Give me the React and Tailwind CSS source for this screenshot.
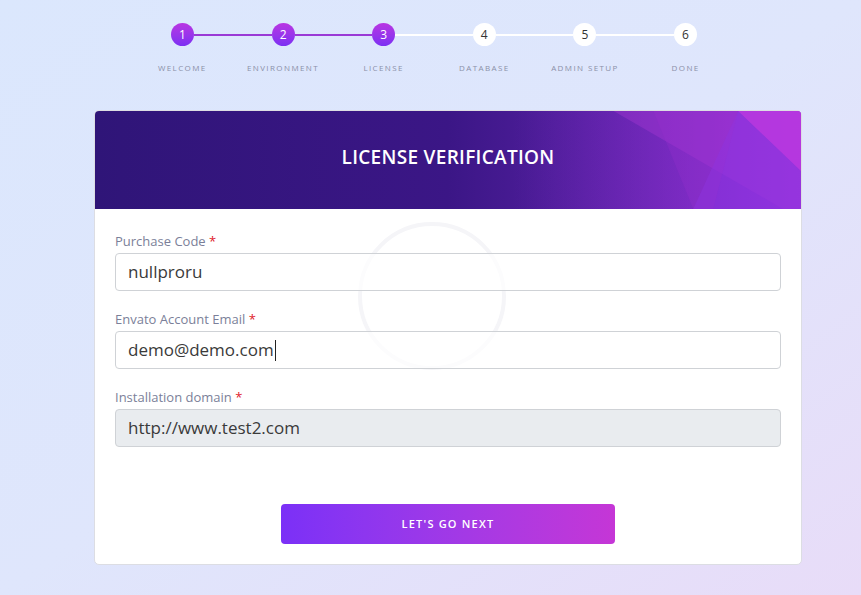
import React from 'react';

const steps = ['Welcome', 'Environment', 'License', 'Database', 'Admin Setup', 'Done'];
const current = 3;

// Stepper row: circles joined by lines, labels underneath
const Stepper = () => (
    <div className="ml-[132px] w-[604px] pt-[23px]">
        <div className="flex items-center px-[39px]">
            {steps.map((s, i) => {
                const n = i + 1;
                const done = n <= current;
                return (
                    <React.Fragment key={s}>
                        {i > 0 && (
                            <div className={n <= current ? 'flex-1 h-[2px] bg-[#9a3ad6]' : 'flex-1 h-[2px] bg-white'} />
                        )}
                        <div
                            className={
                                done
                                    ? 'w-[23px] h-[23px] rounded-full bg-gradient-to-b from-[#b934e2] to-[#7c2ff3] text-white flex items-center justify-center text-[12px]'
                                    : 'w-[23px] h-[23px] rounded-full bg-white text-[#333] flex items-center justify-center text-[12px]'
                            }
                        >
                            {n}
                        </div>
                    </React.Fragment>
                );
            })}
        </div>
        <div className="grid grid-cols-6 mt-[17px]">
            {steps.map(s => (
                <div key={s} className="text-center text-[8px] tracking-[1.4px] uppercase text-[#8b90a8] leading-[10px]">
                    {s}
                </div>
            ))}
        </div>
    </div>
);

const Field = ({ label, value, disabled, caret }) => (
    <div className="mb-[19px]">
        <div className="text-[13px] leading-[18px] text-[#7b7f99] mb-[3px]">
            {label} <span className="text-[#e0202a]">*</span>
        </div>
        <div
            className={
                (disabled ? 'bg-[#e9ecef] ' : 'bg-white/70 ') +
                'h-[38px] border border-[#cfd2d6] rounded-[4px] flex items-center px-[12px] text-[17px] text-[#3a3a3a]'
            }
        >
            {value}
            {caret && <span className="inline-block w-px h-[21px] bg-[#222] ml-px" />}
        </div>
    </div>
);

export default function App() {
    return (
        <div
            className="w-[861px] h-[595px] overflow-hidden bg-gradient-to-br from-[#dbe7fd] via-[#dfe6fc] to-[#e8dcf8] text-[#333]"
            style={{ fontFamily: '"Open Sans", "Liberation Sans", sans-serif' }}
        >
            <Stepper />

            <div className="ml-[94px] mt-[37px] w-[708px] bg-white border border-[#dcdde3] rounded-[5px] overflow-hidden">
                {/* Header */}
                <div className="relative h-[98px] pb-[6px] bg-gradient-to-r from-[#2f1578] via-[#3b1686] to-[#7b2cc8] flex items-center justify-center">
                    <svg className="absolute inset-0 w-full h-full" viewBox="0 0 708 98" preserveAspectRatio="none">
                        <defs>
                            <linearGradient id="glow" x1="0" y1="0" x2="1" y2="0">
                                <stop offset="0" stopColor="#8a2fd0" stopOpacity="0" />
                                <stop offset="1" stopColor="#a435e0" stopOpacity="0.7" />
                            </linearGradient>
                        </defs>
                        <rect x="420" y="0" width="288" height="98" fill="url(#glow)" />
                        <polygon points="520,0 708,0 708,98 690,98" fill="#b03ad8" opacity="0.35" />
                        <polygon points="645,0 708,0 708,98 600,98" fill="#8a35e6" opacity="0.45" />
                        <polygon points="645,0 708,0 708,60" fill="#d03be0" opacity="0.55" />
                        <polygon points="560,0 645,0 620,98 600,98" fill="#9c30d0" opacity="0.25" />
                    </svg>
                    <h1 className="relative text-white text-[19px] font-semibold tracking-[0.3px]">LICENSE VERIFICATION</h1>
                </div>

                {/* Body */}
                <div className="relative px-[20px] pt-[23px] pb-[20px]">
                    <svg className="absolute left-[262px] top-[12px] w-[150px] h-[150px] pointer-events-none" viewBox="0 0 150 150">
                        <circle cx="75" cy="75" r="72" fill="none" stroke="#f5f5f8" strokeWidth="4" />
                    </svg>
                    <div className="relative">
                        <Field label="Purchase Code" value="nullproru" />
                        <Field label="Envato Account Email" value="demo@demo.com" caret />
                        <Field label="Installation domain" value="http://www.test2.com" disabled />
                    </div>
                    <div className="flex justify-center mt-[57px]">
                        <button className="w-[334px] h-[40px] rounded-[4px] bg-gradient-to-r from-[#7b30f7] to-[#c536d6] text-white text-[11px] font-semibold tracking-[1.2px]">
                            LET'S GO NEXT
                        </button>
                    </div>
                </div>
            </div>
        </div>
    );
}
